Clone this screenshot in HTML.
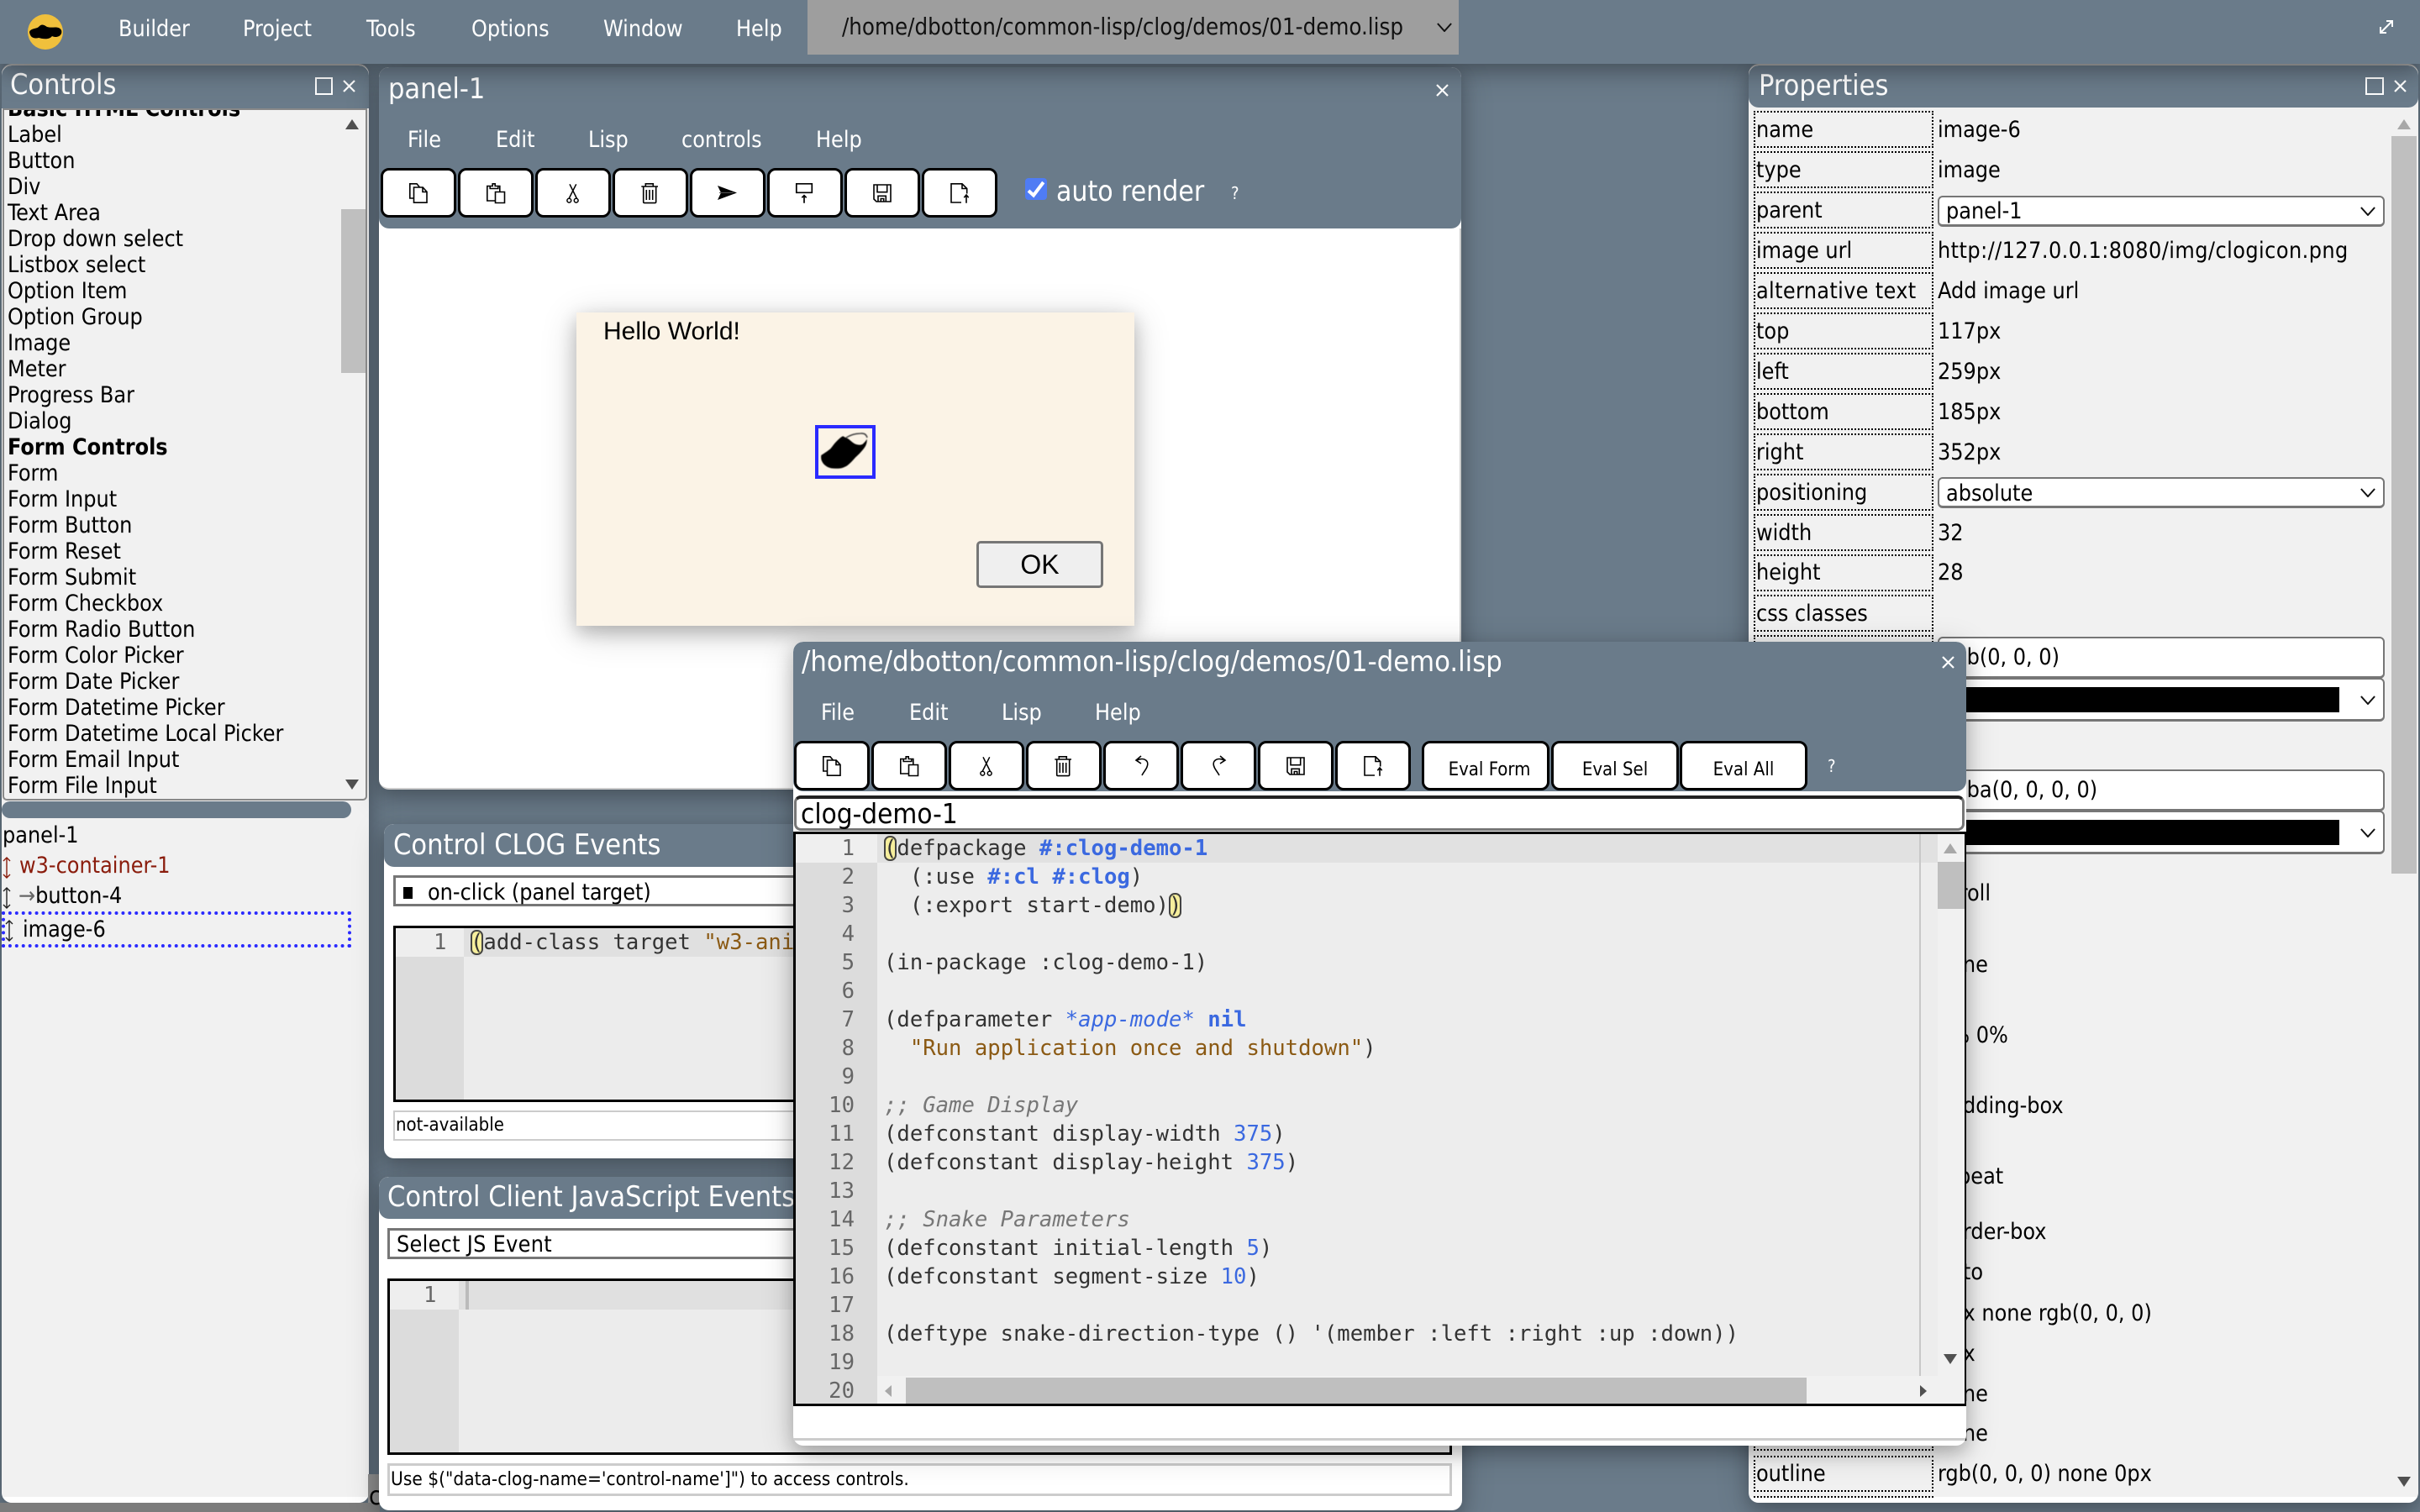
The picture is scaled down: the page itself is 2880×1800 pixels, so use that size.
<!DOCTYPE html>
<html><head><meta charset="utf-8"><title>CLOG Builder</title>
<style>
html,body{margin:0;padding:0;width:2880px;height:1800px;overflow:hidden;background:#6a7b8a}
body{position:relative;font-family:"DejaVu Sans Condensed","DejaVu Sans",sans-serif;font-stretch:condensed;font-size:26.7px;color:#000}
.a,.t,.w,svg.i{position:absolute}
.t{white-space:pre;line-height:40px;height:40px}
.w{box-shadow:0 8px 20px rgba(0,0,0,.2),0 8px 40px rgba(0,0,0,.19);overflow:hidden;border-radius:12px}
.ttl{font-size:34px;color:#fff}
.m{color:#fff;font-size:26.7px}
.b{position:absolute;width:90px;height:59px;box-sizing:border-box;background:#fff;border:3px solid #000;border-radius:10px}
.b svg{position:absolute;left:31px;top:15px;width:24px;height:24px;overflow:visible}
.row{position:absolute;left:2087px;width:214px;height:44px;box-sizing:border-box;border:2px dotted #000}
.mono{font-family:"DejaVu Sans Mono",monospace;font-size:25.6px;line-height:34px;white-space:pre;color:#333;margin:0}
.k{color:#3b69e0;font-weight:bold}.n{color:#3b69e0}.s{color:#8b5a14}.c{color:#777;font-style:italic}.p{color:#3b69e0;font-style:italic}
.pb{background:#f6ee9c;outline:2px solid #444;outline-offset:-2px;border-radius:7px}
.sel{position:absolute;left:2306px;width:532px;box-sizing:border-box;background:#fff;border:2px solid #767676;border-bottom-width:3px;border-radius:6px}
</style></head><body>
<svg width="0" height="0" style="position:absolute"><defs>
<symbol id="copy" viewBox="0 0 24 24" overflow="visible"><path d="M5.5 18H.8V.8H9l3.5 4.2M5.5 5h10.7l4.8 5.3v12.9H5.5zM16 5v5.5h5" fill="none" stroke="#000" stroke-width="1.6"/></symbol>
<symbol id="paste" viewBox="0 0 24 24" overflow="visible"><path d="M4.2 3.5H.8V21h9.7M13.8 3.5h2v7M4.2 6.5v-3h3V.8h3v2.7h3.6v3zM10.5 10.5h11v13h-11z" fill="none" stroke="#000" stroke-width="1.6"/></symbol>
<symbol id="cut" viewBox="0 0 24 24" overflow="visible"><path d="M7 1.3L15.3 18M14.7 1.3L6.3 18" fill="none" stroke="#000" stroke-width="1.5"/><circle cx="6.3" cy="20.7" r="2.4" fill="none" stroke="#000" stroke-width="1.5"/><circle cx="14.7" cy="20.7" r="2.4" fill="none" stroke="#000" stroke-width="1.5"/></symbol>
<symbol id="del" viewBox="0 0 24 24" overflow="visible"><path d="M.3 4h19.7M5.3 4V.8h9V4M2.7 4v18.2c0 .9.5 1.4 1.4 1.4h12.2c.9 0 1.4-.5 1.4-1.4V4M6.3 8v12M10 8v12M13.7 8v12" fill="none" stroke="#000" stroke-width="1.6"/></symbol>
<symbol id="send" viewBox="0 0 24 24" overflow="visible"><path d="M-1 3l23 8.5L-1 20l4-8.500z" fill="#000"/><path d="M1 11.500h17" stroke="#555" stroke-width="1"/></symbol>
<symbol id="prev" viewBox="0 0 24 24" overflow="visible"><path d="M.8.8h18.500v10.500H.8zM10 14.700v9M7.300 17.300l2.700-2.600 2.700 2.600" fill="none" stroke="#000" stroke-width="1.7"/></symbol>
<symbol id="save" viewBox="0 0 24 24" overflow="visible"><path d="M1 2h20v20H4l-3-3zM5 2v8.700h11.700V2M6 22v-6.700h9.300V22M9.300 22v-3.500h3.400V22" fill="none" stroke="#000" stroke-width="1.600"/></symbol>
<symbol id="exp" viewBox="0 0 24 24" overflow="visible"><path d="M13 23H1V.8h13l5.700 5.700v6M14 .8v5.700h5.700M19 14v9.700M16.300 17.300L19 14l2.700 3.300" fill="none" stroke="#000" stroke-width="1.600"/></symbol>
<symbol id="undo" viewBox="0 0 24 24" overflow="visible"><path d="M6 5c9-4 15 1 12 8-1 3-4 6-6 10M11 0L5 5l6 4" fill="none" stroke="#000" stroke-width="1.600"/></symbol>
<symbol id="redo" viewBox="0 0 24 24" overflow="visible"><path d="M18 5C9 1 3 6 6 13c1 3 4 6 6 10M13 0l6 5-6 4" fill="none" stroke="#000" stroke-width="1.600"/></symbol>
<symbol id="chev" viewBox="0 0 20 12"><path d="M1 1l9 10 9-10" fill="none" stroke="#111" stroke-width="2.2"/></symbol>
<symbol id="vv" viewBox="0 0 10 26"><path d="M5 1v24M1 5l4-4 4 4M1 21l4 4 4-4" fill="none" stroke="currentColor" stroke-width="1.4"/></symbol>
</defs></svg>

<!-- Controls window -->
<div class="w" style="left:2px;top:76px;width:437px;height:1713px;background:#f1f1f1;border:2px solid #aaa;border-width:2px 0 0;box-sizing:border-box">
 <div class="a" style="left:0;top:0;right:0;height:51px;background:#6a7b8a;border-radius:12px 12px 0 0"></div>
 <div class="a" style="left:0;bottom:0;right:0;height:7px;background:#fff"></div>
</div>
<div class="t ttl" style="left:12px;top:81px;z-index:1">Controls</div>
<div class="a" style="left:375px;top:92px;width:17px;height:17px;border:2px solid #fff;z-index:1"></div>
<svg class="i" style="left:407px;top:94px;z-index:1" width="17" height="17"><path d="M2 2l13 13M15 2L2 15" stroke="#fff" stroke-width="2.2"/></svg>
<div class="a" style="left:3px;top:129px;width:434px;height:824px;box-sizing:border-box;border:2px solid #888;border-radius:0 0 5px 5px;background:#f1f1f1;overflow:hidden;z-index:1">
 <div class="a" style="left:401px;top:118px;width:30px;height:195px;background:#bfbfbf"></div>
 <svg class="i" style="left:405px;top:10px" width="18" height="14"><path d="M9 1l8 12H1z" fill="#505050"/></svg>
 <svg class="i" style="left:405px;top:796px" width="18" height="14"><path d="M9 13L1 1h16z" fill="#505050"/></svg>
 <div class="a" style="left:4px;top:-17px;line-height:31px;white-space:pre;font-size:26.7px"><b>Basic HTML Controls</b>
Label
Button
Div
Text Area
Drop down select
Listbox select
Option Item
Option Group
Image
Meter
Progress Bar
Dialog
<b>Form Controls</b>
Form
Form Input
Form Button
Form Reset
Form Submit
Form Checkbox
Form Radio Button
Form Color Picker
Form Date Picker
Form Datetime Picker
Form Datetime Local Picker
Form Email Input
Form File Input</div>
</div>
<div class="a" style="left:2px;top:954px;width:416px;height:20px;background:#6a7b8a;border-radius:10px;z-index:1"></div>
<div class="t" style="left:3px;top:975px;z-index:1">panel-1</div>
<svg class="i" style="left:3px;top:1020px;z-index:1;color:#8a1c0c" width="10" height="26"><use href="#vv"/></svg>
<div class="t" style="left:23px;top:1011px;color:#8a1c0c;z-index:1">w3-container-1</div>
<svg class="i" style="left:3px;top:1056px;z-index:1;color:#222" width="10" height="26"><use href="#vv"/></svg>
<div class="t" style="left:22px;top:1047px;z-index:1"><span style="color:#666">→</span>button-4</div>
<div class="a" style="left:2px;top:1085px;width:416px;height:43px;box-sizing:border-box;border:4px dotted #2a2aff;z-index:1"></div>
<svg class="i" style="left:6px;top:1095px;z-index:1;color:#222" width="10" height="26"><use href="#vv"/></svg>
<div class="t" style="left:27px;top:1087px;z-index:1">image-6</div>

<!-- gray remnant bottom left -->
<div class="a" style="left:438px;top:1755px;width:14px;height:45px;background:#8c8c8c"></div>
<div class="a" style="left:0;top:1789px;width:452px;height:11px;background:#7c7c7c"></div>
<div class="t" style="left:439px;top:1762px;font-size:30px">c</div>

<!-- panel-1 window -->
<div class="w" style="left:451px;top:80px;width:1288px;height:860px;background:#fff;border-bottom:2px solid #ccc;box-sizing:border-box">
 <div class="a" style="left:0;top:0;right:0;height:192px;background:#6a7b8a;border-radius:12px"></div>
 <div class="a" style="right:0;top:192px;width:2px;bottom:0;background:#ccc"></div>
</div>
<div class="t ttl" style="left:462px;top:86px">panel-1</div>
<svg class="i" style="left:1708px;top:99px" width="17" height="17"><path d="M2 2l13 13M15 2L2 15" stroke="#fff" stroke-width="2.2"/></svg>
<div class="t m" style="left:485px;top:147px">File</div>
<div class="t m" style="left:590px;top:147px">Edit</div>
<div class="t m" style="left:700px;top:147px">Lisp</div>
<div class="t m" style="left:811px;top:147px">controls</div>
<div class="t m" style="left:971px;top:147px">Help</div>
<div class="b" style="left:453px;top:200px"><svg><use href="#copy"/></svg></div>
<div class="b" style="left:545px;top:200px"><svg><use href="#paste"/></svg></div>
<div class="b" style="left:637px;top:200px"><svg><use href="#cut"/></svg></div>
<div class="b" style="left:729px;top:200px"><svg><use href="#del"/></svg></div>
<div class="b" style="left:821px;top:200px"><svg><use href="#send"/></svg></div>
<div class="b" style="left:913px;top:200px"><svg><use href="#prev"/></svg></div>
<div class="b" style="left:1005px;top:200px"><svg><use href="#save"/></svg></div>
<div class="b" style="left:1097px;top:200px"><svg><use href="#exp"/></svg></div>
<div class="a" style="left:1220px;top:212px;width:26px;height:26px;background:#4f7cf4;border-radius:4px"></div>
<svg class="i" style="left:1220px;top:212px" width="26" height="26"><path d="M4 15l6 5.500L21.700 5" fill="none" stroke="#fff" stroke-width="4"/></svg>
<div class="t" style="left:1257px;top:208px;color:#fff;font-size:33.4px">auto render</div>
<div class="t" style="left:1465px;top:210px;color:#fff;font-size:20px">?</div>

<!-- Hello dialog -->
<div class="w" style="left:686px;top:372px;width:664px;height:373px;background:#fbf3e6;border-radius:0">
 <div class="t" style="left:32px;top:3px;font:30px/40px 'Liberation Sans',sans-serif">Hello World!</div>
 <div class="a" style="left:284px;top:134px;width:72px;height:64px;box-sizing:border-box;border:4px solid #2a2aff">
  <svg class="i" style="left:0;top:0;filter:blur(.6px)" width="64" height="56" viewBox="0 0 64 56"><path d="M3.300 32C8 29 11 27 14.300 24.300C17 21 19 18 21 16C24 13 27 10 29.300 9.300C32 11 34 11.500 36 12.700C40 16 43 19 46 19.300C49 20 51 19.500 52.700 18.700C54.500 17 56.500 15 57.700 12.700C58 16 57 19 56 21C53 26 48 31 44.300 34.300C41 38 38 41.500 34.300 44.300C30 47 26 48 22.700 47.700C18 48 14 47.500 11 46C7 44 5 41 4.300 39.300C3 37 3 34 3.300 32Z" fill="#000"/><path d="M33 11C38 8 44 6 50 6C54 5.500 57 7 58 11" fill="none" stroke="#444" stroke-width="1.600"/></svg>
 </div>
 <div class="a" style="left:476px;top:272px;width:151px;height:56px;box-sizing:border-box;background:#efefef;border:3px solid #767676;border-radius:5px;text-align:center;font:32px/50px 'Liberation Sans',sans-serif">OK</div>
</div>

<!-- Control CLOG Events -->
<div class="w" style="left:457px;top:981px;width:1200px;height:398px;background:#fff">
 <div class="a" style="left:0;top:0;right:0;height:51px;background:#6a7b8a;border-radius:12px 12px 12px 12px"></div>
</div>
<div class="t ttl" style="left:468px;top:986px">Control CLOG Events</div>
<div class="a" style="left:468px;top:1042px;width:1100px;height:37px;box-sizing:border-box;border:3px solid #767676;background:#fff"></div>
<div class="a" style="left:480px;top:1056px;width:11px;height:14px;background:#000"></div>
<div class="t" style="left:509px;top:1043px">on-click (panel target)</div>
<div class="a" style="left:468px;top:1102px;width:1100px;height:210px;box-sizing:border-box;border:3px solid #000;background:#ececec;overflow:hidden">
 <div class="a" style="left:0;top:0;width:81px;height:100%;background:#dcdcdc"></div>
 <div class="a" style="left:0;top:0;width:81px;height:34px;background:#eee"></div>
 <div class="a" style="left:81px;top:0;right:0;height:34px;background:#e0e0e0"></div>
 <pre class="mono a" style="left:45px;top:0;color:#666">1</pre>
 <pre class="mono a" style="left:89px;top:0"><span class="pb">(</span>add-class target <span class="s">"w3-animate</span></pre>
</div>
<div class="a" style="left:468px;top:1322px;width:1100px;height:36px;box-sizing:border-box;border:2px solid #ccc;background:#fff;font-size:22px;line-height:32px;padding-left:1px">not-available</div>

<!-- Control Client JS Events -->
<div class="w" style="left:451px;top:1401px;width:1289px;height:397px;background:#fff">
 <div class="a" style="left:0;top:0;right:0;height:50px;background:#6a7b8a;border-radius:12px"></div>
</div>
<div class="t ttl" style="left:461px;top:1405px">Control Client JavaScript Events</div>
<div class="a" style="left:461px;top:1462px;width:1100px;height:37px;box-sizing:border-box;border:3px solid #767676;background:#fff"></div>
<div class="t" style="left:472px;top:1462px;letter-spacing:.3px">Select JS Event</div>
<div class="a" style="left:461px;top:1522px;width:1267px;height:210px;box-sizing:border-box;border:3px solid #000;background:#ececec;overflow:hidden">
 <div class="a" style="left:0;top:0;width:82px;height:100%;background:#dcdcdc"></div>
 <div class="a" style="left:0;top:0;width:82px;height:34px;background:#eee"></div>
 <div class="a" style="left:82px;top:0;right:0;height:34px;background:#e0e0e0"></div>
 <div class="a" style="left:90px;top:0;width:4px;height:34px;background:#bbb"></div>
 <pre class="mono a" style="left:40px;top:0;color:#666">1</pre>
</div>
<div class="a" style="left:461px;top:1742px;width:1267px;height:39px;box-sizing:border-box;border:3px solid #ccc;background:#fff;font-size:22.5px;line-height:32px;padding-left:1px;white-space:pre">Use $("data-clog-name='control-name']") to access controls.</div>

<!-- Properties -->
<div class="w" style="left:2081px;top:76px;width:797px;height:1713px;background:#f1f1f1;border-top:2px solid #aaa;box-sizing:border-box">
 <div class="a" style="left:0;top:0;right:0;height:50px;background:#6a7b8a;border-radius:12px"></div>
 <div class="a" style="left:0;bottom:0;right:0;height:7px;background:#fff"></div>
 <div class="a" style="left:765px;top:84px;width:30px;height:878px;background:#bfbfbf"></div>
 <svg class="i" style="left:771px;top:63px" width="18" height="14"><path d="M9 1l8 12H1z" fill="#a8a8a8"/></svg>
 <svg class="i" style="left:771px;top:1679px" width="18" height="14"><path d="M9 13L1 1h16z" fill="#505050"/></svg>
</div>
<div class="t ttl" style="left:2093px;top:82px">Properties</div>
<div class="a" style="left:2815px;top:92px;width:18px;height:17px;border:2px solid #fff"></div>
<svg class="i" style="left:2848px;top:94px" width="17" height="17"><path d="M2 2l13 13M15 2L2 15" stroke="#fff" stroke-width="2.2"/></svg>
<div class="row" style="top:132px"></div><div class="t" style="left:2090px;top:135px">name</div><div class="t" style="left:2306px;top:135px">image-6</div>
<div class="row" style="top:180px"></div><div class="t" style="left:2090px;top:183px">type</div><div class="t" style="left:2306px;top:183px">image</div>
<div class="row" style="top:228px"></div><div class="t" style="left:2090px;top:231px">parent</div>
<div class="sel" style="top:233px;height:37px"></div><div class="t" style="left:2316px;top:232px">panel-1</div><svg class="i" style="left:2809px;top:246px" width="18" height="11"><use href="#chev"/></svg>
<div class="row" style="top:276px"></div><div class="t" style="left:2090px;top:279px">image url</div><div class="t" style="left:2306px;top:279px;letter-spacing:.45px">http://127.0.0.1:8080/img/clogicon.png</div>
<div class="row" style="top:324px"></div><div class="t" style="left:2090px;top:327px;letter-spacing:.35px">alternative text</div><div class="t" style="left:2306px;top:327px">Add image url</div>
<div class="row" style="top:372px"></div><div class="t" style="left:2090px;top:375px">top</div><div class="t" style="left:2306px;top:375px">117px</div>
<div class="row" style="top:420px"></div><div class="t" style="left:2090px;top:423px">left</div><div class="t" style="left:2306px;top:423px">259px</div>
<div class="row" style="top:468px"></div><div class="t" style="left:2090px;top:471px">bottom</div><div class="t" style="left:2306px;top:471px">185px</div>
<div class="row" style="top:516px"></div><div class="t" style="left:2090px;top:519px">right</div><div class="t" style="left:2306px;top:519px">352px</div>
<div class="row" style="top:564px"></div><div class="t" style="left:2090px;top:567px">positioning</div>
<div class="sel" style="top:568px;height:37px"></div><div class="t" style="left:2316px;top:568px">absolute</div><svg class="i" style="left:2809px;top:581px" width="18" height="11"><use href="#chev"/></svg>
<div class="row" style="top:612px"></div><div class="t" style="left:2090px;top:615px">width</div><div class="t" style="left:2306px;top:615px">32</div>
<div class="row" style="top:660px"></div><div class="t" style="left:2090px;top:662px">height</div><div class="t" style="left:2306px;top:662px">28</div>
<div class="row" style="top:708px"></div><div class="t" style="left:2090px;top:711px">css classes</div>
<div class="row" style="top:756px"></div>

<div class="sel" style="top:758px;height:50px"></div><div class="t" style="left:2316px;top:763px">rgb(0, 0, 0)</div>
<div class="sel" style="top:807px;height:52px"></div><div class="a" style="left:2316px;top:818px;width:468px;height:30px;background:#000"></div><svg class="i" style="left:2809px;top:828px" width="18" height="11"><use href="#chev"/></svg>
<div class="sel" style="top:916px;height:50px"></div><div class="t" style="left:2316px;top:921px">rgba(0, 0, 0, 0)</div>
<div class="sel" style="top:965px;height:52px"></div><div class="a" style="left:2316px;top:976px;width:468px;height:30px;background:#000"></div><svg class="i" style="left:2809px;top:986px" width="18" height="11"><use href="#chev"/></svg>
<div class="t" style="left:2306px;top:1044px">scroll</div>
<div class="t" style="left:2306px;top:1129px">none</div>
<div class="t" style="left:2306px;top:1213px">0% 0%</div>
<div class="t" style="left:2306px;top:1297px">padding-box</div>
<div class="t" style="left:2306px;top:1381px">repeat</div>
<div class="t" style="left:2306px;top:1447px">border-box</div>
<div class="t" style="left:2306px;top:1495px">auto</div>
<div class="t" style="left:2306px;top:1544px">0px none rgb(0, 0, 0)</div>
<div class="t" style="left:2306px;top:1592px">0px</div>
<div class="t" style="left:2306px;top:1640px">none</div>
<div class="t" style="left:2306px;top:1687px">none</div>
<div class="row" style="top:1683px"></div>
<div class="row" style="top:1733px;height:43px"></div><div class="t" style="left:2090px;top:1735px">outline</div><div class="t" style="left:2306px;top:1735px">rgb(0, 0, 0) none 0px</div>
<div class="a" style="left:2087px;top:1781px;width:214px;height:2px;border-top:2px dotted #000"></div>

<!-- Editor window -->
<div class="w" style="left:944px;top:764px;width:1396px;height:957px;background:#fff;border-radius:12px;z-index:3">
 <div class="a" style="left:0;top:0;right:0;height:178px;background:#6a7b8a;border-radius:12px"></div>
 <div class="t" style="left:10px;top:4px;color:#fff;font-size:34.2px">/home/dbotton/common-lisp/clog/demos/01-demo.lisp</div>
 <svg class="i" style="left:1366px;top:16px" width="17" height="17"><path d="M2 2l13 13M15 2L2 15" stroke="#fff" stroke-width="2.2"/></svg>
 <div class="t m" style="left:33px;top:65px">File</div>
 <div class="t m" style="left:138px;top:65px">Edit</div>
 <div class="t m" style="left:248px;top:65px">Lisp</div>
 <div class="t m" style="left:359px;top:65px">Help</div>
 <div class="b" style="left:1px;top:118px"><svg><use href="#copy"/></svg></div>
 <div class="b" style="left:93px;top:118px"><svg><use href="#paste"/></svg></div>
 <div class="b" style="left:185px;top:118px"><svg><use href="#cut"/></svg></div>
 <div class="b" style="left:277px;top:118px"><svg><use href="#del"/></svg></div>
 <div class="b" style="left:369px;top:118px"><svg><use href="#undo"/></svg></div>
 <div class="b" style="left:461px;top:118px"><svg><use href="#redo"/></svg></div>
 <div class="b" style="left:553px;top:118px"><svg><use href="#save"/></svg></div>
 <div class="b" style="left:645px;top:118px"><svg><use href="#exp"/></svg></div>
 <div class="b" style="left:748px;top:118px;width:152px;padding-left:9px;text-align:center;font-size:22px;line-height:63px">Eval Form</div>
 <div class="b" style="left:902px;top:118px;width:152px;text-align:center;font-size:22px;line-height:63px">Eval Sel</div>
 <div class="b" style="left:1055px;top:118px;width:152px;text-align:center;font-size:22px;line-height:63px">Eval All</div>
 <div class="t" style="left:1231px;top:128px;color:#fff;font-size:20px">?</div>
 <div class="a" style="left:1px;top:183px;width:1393px;height:42px;box-sizing:border-box;border:3px solid #767676;border-top:4px solid #222;border-radius:8px;background:#fff;font-size:33px;line-height:36px;padding-left:5px">clog-demo-1</div>
 <div class="a" style="left:0;top:226px;width:1396px;height:684px;box-sizing:border-box;border:3px solid #000;border-right-width:2px;background:#ededed;overflow:hidden">
  <div class="a" style="left:0;top:0;width:97px;height:100%;background:#dcdcdc"></div>
  <div class="a" style="left:0;top:0;width:97px;height:34px;background:#efefef"></div>
  <div class="a" style="left:97px;top:0;width:1262px;height:34px;background:#e1e1e1"></div>
  <div class="a" style="left:1337px;top:0;width:2px;height:100%;background:#c8c8c8"></div>
  <div class="a" style="left:1359px;top:0;width:34px;height:100%;background:#f1f1f1"></div>
  <div class="a" style="left:1359px;top:33px;width:32px;height:56px;background:#bfbfbf"></div>
  <pre class="mono a" style="left:0;top:0;width:70px;text-align:right;color:#666">1
2
3
4
5
6
7
8
9
10
11
12
13
14
15
16
17
18
19
20</pre>
  <pre class="mono a" style="left:105px;top:0"><span class="pb">(</span>defpackage <span class="k">#:clog-demo-1</span>
  (:use <span class="k">#:cl</span> <span class="k">#:clog</span>)
  (:export start-demo)<span class="pb">)</span>

(in-package :clog-demo-1)

(defparameter <span class="p">*app-mode*</span> <span class="k">nil</span>
  <span class="s">"Run application once and shutdown"</span>)

<span class="c">;; Game Display</span>
(defconstant display-width <span class="n">375</span>)
(defconstant display-height <span class="n">375</span>)

<span class="c">;; Snake Parameters</span>
(defconstant initial-length <span class="n">5</span>)
(defconstant segment-size <span class="n">10</span>)

(deftype snake-direction-type () '(member :left :right :up :down))</pre>
  <div class="a" style="left:97px;top:645px;width:1296px;height:36px;background:#f1f1f1"></div>
  <div class="a" style="left:131px;top:647px;width:1072px;height:31px;background:#bfbfbf"></div>
  <svg class="i" style="left:105px;top:655px" width="10" height="16"><path d="M9 1v14L1 8z" fill="#a8a8a8"/></svg>
  <svg class="i" style="left:1337px;top:655px" width="10" height="16"><path d="M1 1v14l8-7z" fill="#505050"/></svg>
  <svg class="i" style="left:1365px;top:10px" width="18" height="14"><path d="M9 1l8 12H1z" fill="#a8a8a8"/></svg>
  <svg class="i" style="left:1365px;top:618px" width="18" height="14"><path d="M9 13L1 1h16z" fill="#505050"/></svg>
 </div>
 <div class="a" style="left:0;top:948px;right:0;height:3px;background:#ccc"></div>
</div>

<!-- Top bar -->
<div class="a" style="left:0;top:0;width:2880px;height:76px;background:#6a7b8a;box-shadow:0 8px 20px rgba(0,0,0,.2),0 8px 40px rgba(0,0,0,.19);z-index:5">
 <svg class="i" style="left:30px;top:14px" width="50" height="50" viewBox="30 14 50 50"><circle cx="54" cy="38" r="21" fill="#f0c03c"/><path d="M35 38c2-5 9-3 12-7 3-3 6-1 9 1 6 2 14-2 17 4 2 6-5 10-11 7-4 5-12 3-16 2-4 1-10 1-11-7z" fill="#000"/></svg>
 <div class="t m" style="left:141px;top:15px">Builder</div>
 <div class="t m" style="left:289px;top:15px">Project</div>
 <div class="t m" style="left:436px;top:15px">Tools</div>
 <div class="t m" style="left:561px;top:15px">Options</div>
 <div class="t m" style="left:718px;top:15px">Window</div>
 <div class="t m" style="left:876px;top:15px">Help</div>
 <div class="a" style="left:961px;top:0;width:775px;height:65px;background:#9e9e9e"></div>
 <div class="t" style="left:1002px;top:13px;color:#111;font-size:27.4px">/home/dbotton/common-lisp/clog/demos/01-demo.lisp</div>
 <svg class="i" style="left:1710px;top:27px" width="18" height="11"><use href="#chev"/></svg>
 <svg class="i" style="left:2830px;top:22px" width="20" height="20"><path d="M3 17L17 3M10 3h7v7M3 10v7h7" fill="none" stroke="#fff" stroke-width="2"/></svg>
</div>
</body></html>
